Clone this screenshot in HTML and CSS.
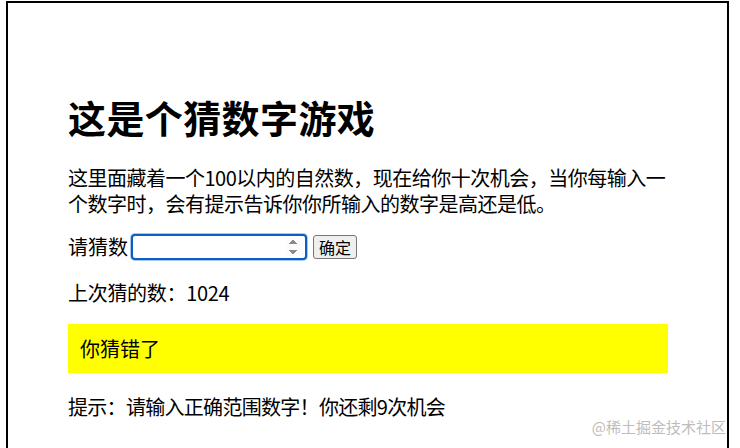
FILE: index.html
```html
<!DOCTYPE html>
<html lang="zh-CN">
<head>
    <meta charset="UTF-8">
    <meta name="viewport" content="width=device-width, initial-scale=1.0">
    <title>猜数字游戏</title>
    <link rel="stylesheet" href="styles.css">
</head>
<body>
    <div class="frame">
        <h1>这是个猜数字游戏</h1>
        <p class="intro">这里面藏着一个100以内的自然数，现在给你十次机会，当你每输入一个数字时，会有提示告诉你你所输入的数字是高还是低。</p>

        <div class="guessRow">
            <label for="guessField">请猜数</label>
            <input type="number" id="guessField" class="guessField">
            <button class="guessSubmit">确定</button>
        </div>

        <p class="lastGuess">上次猜的数：1024</p>
        <p class="result">你猜错了</p>
        <p class="hint">提示：请输入正确范围数字！你还剩9次机会</p>
    </div>
    <div class="mark">@稀土掘金技术社区</div>
</body>
</html>
```

FILE: styles.css
```css
html, body {
    margin: 0;
    height: 100%;
    overflow: hidden;
    background: #fff;
}

body {
    font-family: "Noto Sans CJK SC", "Noto Sans", sans-serif;
    font-size: 20px;
    line-height: 26px;
    color: #000;
}

.frame {
    margin: 1px 11px 0 6px;
    border: 2px solid #000;
    border-bottom: none;
    height: 100%;
    box-sizing: border-box;
    padding: 89px 59px 0 60px;
}

h1 {
    margin: 0;
    font-size: 38px;
    line-height: 50px;
    font-weight: 700;
    letter-spacing: 0.4px;
}

.intro {
    margin: 23px 0 0;
    letter-spacing: -0.5px;
}

.guessRow {
    display: flex;
    align-items: center;
    margin-top: 16px;
    height: 28px;
}

.guessField {
    width: 176px;
    height: 26px;
    box-sizing: border-box;
    margin: 0 6px 0 3px;
    border: 2px solid #0b5fc4;
    border-radius: 4px;
    box-shadow: 0 0 0 1px #a9c6ec;
    outline: none;
    font-size: 16px;
    padding: 0 4px;
}

.guessField::-webkit-inner-spin-button {
    opacity: 1;
    height: 20px;
}

.guessSubmit {
    height: 24px;
    padding: 0 5px;
    font-family: "Noto Sans CJK SC", sans-serif;
    font-size: 16px;
    line-height: 20px;
    background: #efefef;
    border: 1px solid #767676;
    border-radius: 3px;
    color: #000;
}

.lastGuess {
    margin: 19px 0 0;
    letter-spacing: -0.3px;
}

.result {
    margin: 18px 0 0;
    background: #ff0;
    padding: 12px 12px 11px;
}

.hint {
    margin: 21px 0 0;
    letter-spacing: -0.7px;
}

.mark {
    position: absolute;
    right: 14px;
    bottom: 12px;
    font-size: 15px;
    line-height: 18px;
    color: #bdbdbd;
}
```
